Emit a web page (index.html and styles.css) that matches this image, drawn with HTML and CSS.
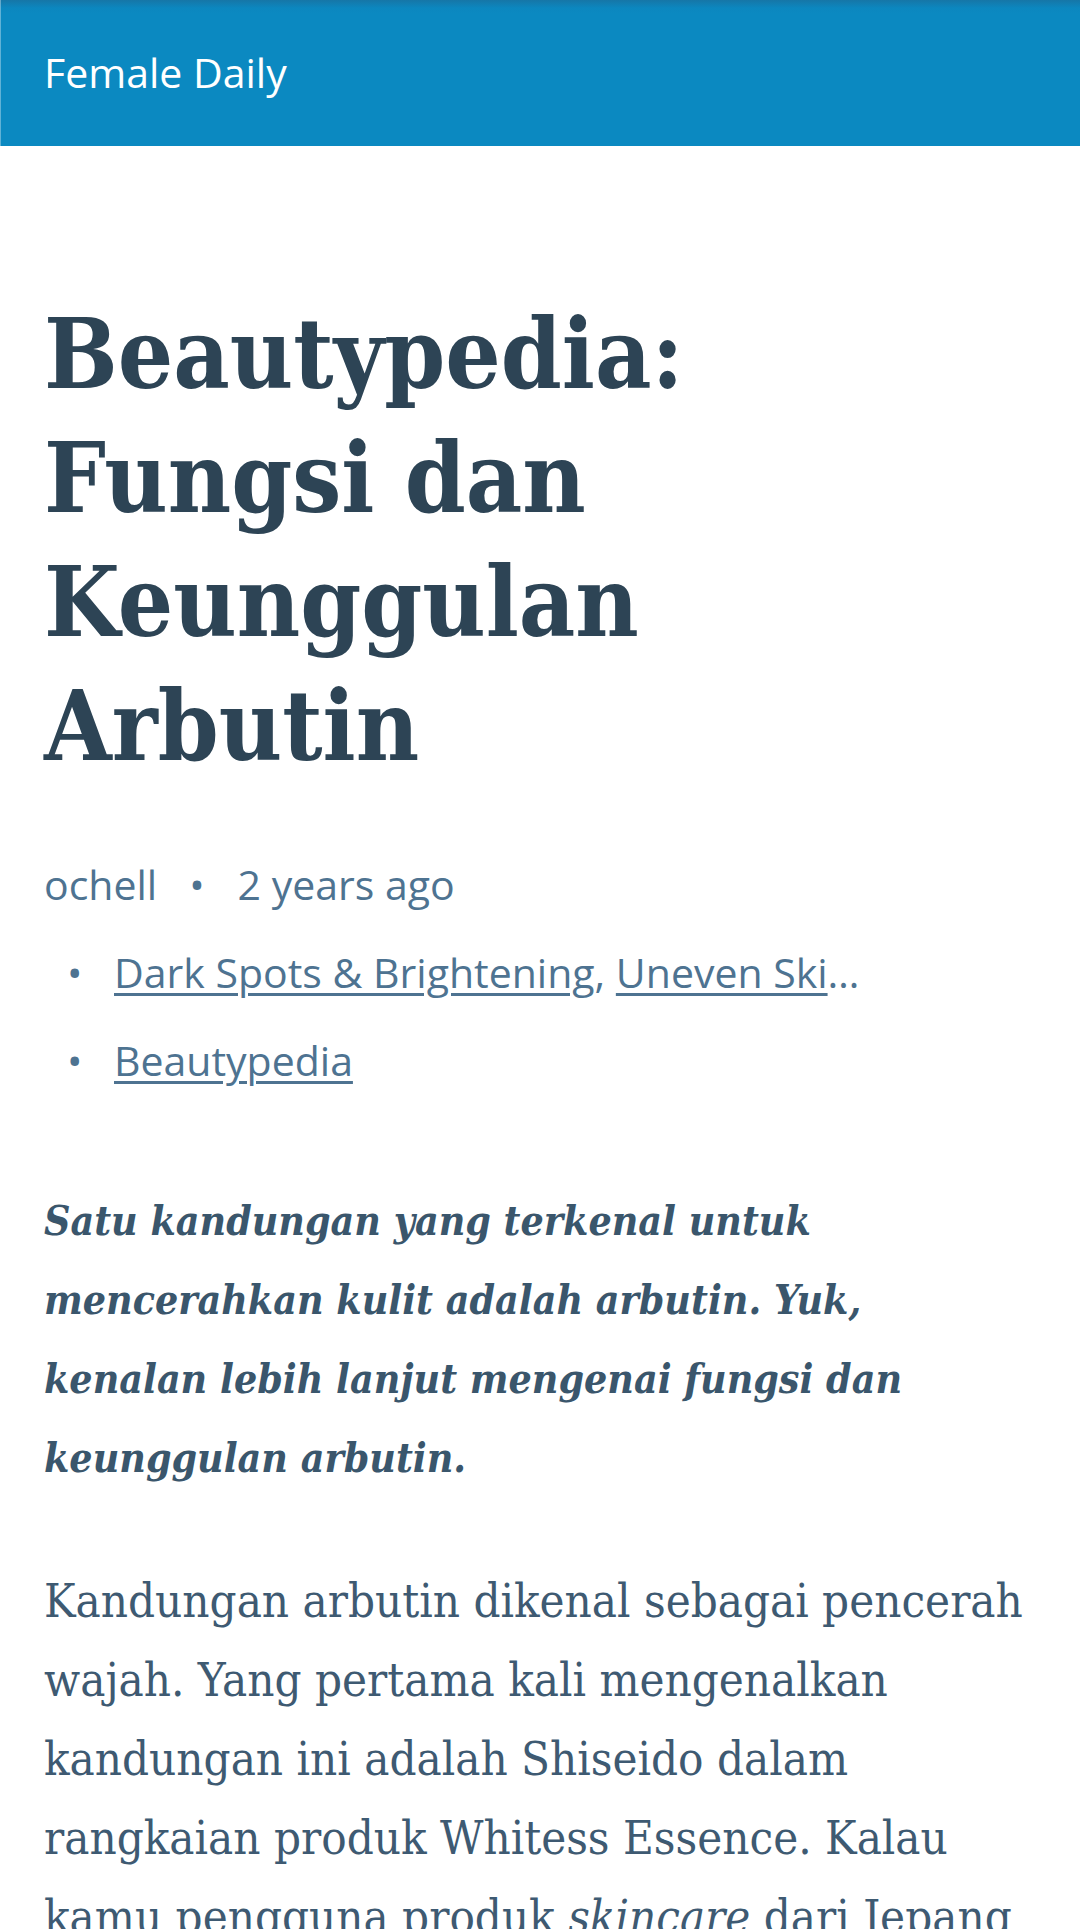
FILE: index.html
```html
<!DOCTYPE html>
<html lang="id">
<head>
<meta charset="utf-8">
<title>Beautypedia: Fungsi dan Keunggulan Arbutin</title>
<link rel="stylesheet" href="styles.css">
</head>
<body>
<header class="site-header">
  <a class="brand" href="#">Female Daily</a>
</header>
<main class="article">
  <h1 class="title">Beautypedia: Fungsi dan Keunggulan Arbutin</h1>
  <div class="meta">
    <span class="author">ochell</span>
    <span class="sep">•</span>
    <span class="time">2 years ago</span>
  </div>
  <ul class="tags">
    <li class="tag-row"><span class="tag-text"><a href="#">Dark Spots &amp; Brightening</a>, <a href="#">Uneven Skin Tone</a></span></li>
    <li class="tag-row"><span class="tag-text"><a href="#">Beautypedia</a></span></li>
  </ul>
  <p class="excerpt">Satu kandungan yang terkenal untuk mencerahkan kulit adalah arbutin. Yuk, kenalan lebih lanjut mengenai fungsi dan keunggulan arbutin.</p>
  <p class="body-text">Kandungan arbutin dikenal sebagai pencerah wajah. Yang pertama kali mengenalkan kandungan ini adalah Shiseido dalam rangkaian produk Whitess Essence. Kalau kamu pengguna produk <em>skincare</em> dari Jepang pasti sudah tidak asing lagi dengan kandungan yang satu ini.</p>
</main>
</body>
</html>
```
FILE: styles.css
```css
html, body {
  margin: 0;
  padding: 0;
  background: #ffffff;
}

.site-header {
  height: 146px;
  background: linear-gradient(to bottom, #1676a7 0px, #0c87bf 8px, #0b89c1 14px);
  box-shadow: inset 1px 0 0 rgba(255, 255, 255, 0.35);
  display: flex;
  align-items: flex-start;
  padding: 0 44px;
}

.brand {
  font-family: "Open Sans", sans-serif;
  font-size: 41px;
  line-height: 56px;
  color: #ffffff;
  text-decoration: none;
  margin-top: 44px;
}

.article {
  padding: 0 44px;
}

.title {
  font-family: "DejaVu Serif Condensed", "DejaVu Serif", serif;
  font-weight: bold;
  font-size: 97px;
  line-height: 124px;
  color: #2d4455;
  margin: 146px 0 0 0;
  max-width: 820px;
}

.meta {
  font-family: "Open Sans", sans-serif;
  font-size: 41px;
  line-height: 88px;
  color: #4e7391;
  margin-top: 52px;
  display: flex;
}

.sep {
  margin: 0 33px 0 32px;
}

.tags {
  list-style: none;
  margin: 0;
  padding: 0;
  font-family: "Open Sans", sans-serif;
  font-size: 41px;
  line-height: 88px;
  color: #4e7391;
}

.tag-row {
  display: flex;
}

.tag-row::before {
  content: "•";
  width: 70px;
  padding-left: 23px;
  box-sizing: border-box;
  flex: none;
}

.tag-text {
  display: block;
  width: 764px;
  white-space: nowrap;
  overflow: hidden;
  text-overflow: ellipsis;
}

.tag-text a {
  color: #4e7391;
  text-decoration: underline;
  text-decoration-thickness: 3px;
  text-underline-offset: 5px;
}

.excerpt {
  font-family: "DejaVu Serif Condensed", "DejaVu Serif", serif;
  font-style: italic;
  font-weight: bold;
  font-size: 40.7px;
  line-height: 79px;
  color: #3a566c;
  margin: 78px 0 0 0;
  max-width: 880px;
}

.body-text {
  font-family: "DejaVu Serif Condensed", "DejaVu Serif", serif;
  font-size: 47px;
  line-height: 79px;
  color: #3e5a72;
  margin: 63px 0 0 0;
}

.body-text em {
  font-style: italic;
}
```
